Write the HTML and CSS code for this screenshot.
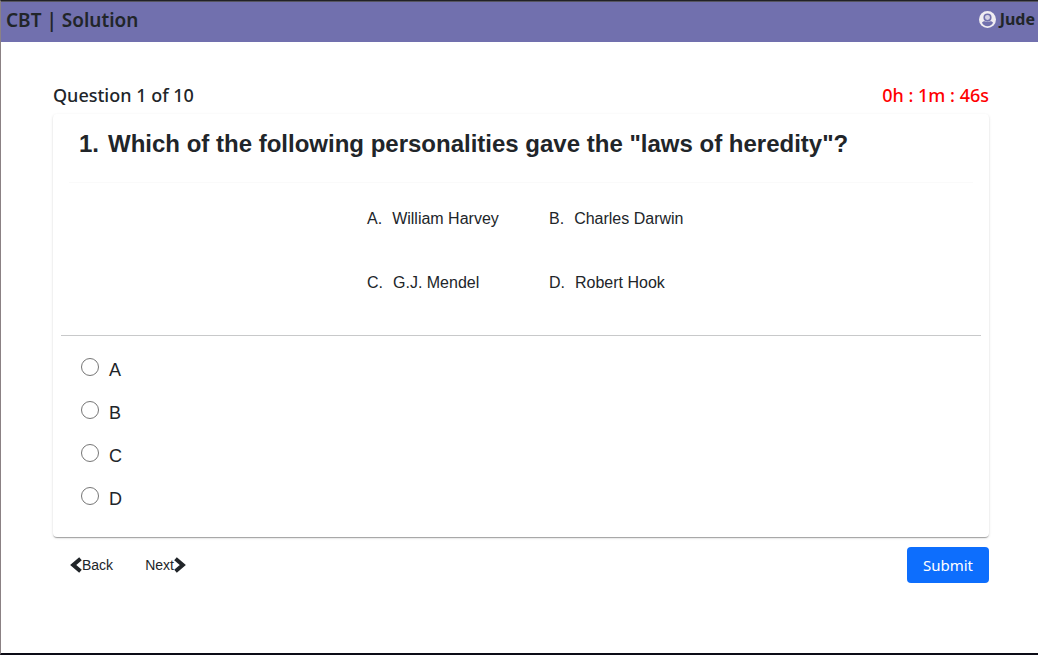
FILE: index.html
```html
<!DOCTYPE html>
<html lang="en">
<head>
<meta charset="utf-8">
<meta name="viewport" content="width=device-width, initial-scale=1">
<title>CBT | Solution</title>
<link rel="stylesheet" href="styles.css">
</head>
<body class="page">
  <header class="navbar">
    <h1 class="brand">CBT | Solution</h1>
    <div class="user">
      <svg class="user-icon" viewBox="0 0 16 16" aria-hidden="true">
        <circle cx="8" cy="8" r="8" fill="#f0edf2"/>
        <path fill="#7170ae" d="M2.800 11.100c.9-1.100 2-1.500 3.200-1.300 1.300.6 2.700.6 4 0 1.200-.2 2.300.2 3.200 1.300C12.200 13.200 10.300 14.300 8 14.300S3.800 13.200 2.800 11.100Z"/>
        <circle cx="8" cy="6.200" r="3.100" fill="#d5d2e6" stroke="#7170ae" stroke-width="1.500"/>
      </svg>
      <span class="user-name">Jude</span>
    </div>
  </header>
  <main class="content">
    <div class="status">
      <h2 class="status-text">Question 1 of 10</h2>
      <div class="status-text timer">0h : 1m : 46s</div>
    </div>
    <form class="quiz">
      <section class="card">
        <h3 class="question"><span>1.</span><span>Which of the following personalities gave the "laws of heredity"?</span></h3>
        <div class="options">
          <div class="option"><span>A.</span><span>William Harvey</span></div>
          <div class="option"><span>B.</span><span>Charles Darwin</span></div>
          <div class="option"><span>C.</span><span>G.J. Mendel</span></div>
          <div class="option"><span>D.</span><span>Robert Hook</span></div>
        </div>
        <div class="answers" role="radiogroup" aria-label="Answer">
          <label class="answer"><input class="radio" type="radio" name="answer" value="A"><span class="letter">A</span></label>
          <label class="answer"><input class="radio" type="radio" name="answer" value="B"><span class="letter">B</span></label>
          <label class="answer"><input class="radio" type="radio" name="answer" value="C"><span class="letter">C</span></label>
          <label class="answer"><input class="radio" type="radio" name="answer" value="D"><span class="letter">D</span></label>
        </div>
      </section>
      <div class="actions">
        <div class="pager">
          <button class="link-button" type="button">
            <svg class="chevron" viewBox="0 0 12 16" aria-hidden="true"><path d="M10.500 1.700 3.200 8l7.300 6.300"/></svg>Back
          </button>
          <button class="link-button" type="button">
            Next<svg class="chevron" viewBox="0 0 12 16" aria-hidden="true"><path d="M1.500 1.700 8.800 8l-7.300 6.300"/></svg>
          </button>
        </div>
        <button class="submit" type="submit">Submit</button>
      </div>
    </form>
  </main>
</body>
</html>
```
FILE: styles.css
```css
* {
  box-sizing: border-box;
}

.page {
  margin: 0;
  min-height: 100vh;
  border: solid #8b8184;
  border-width: 1px 0 2px 1px;
  border-top-color: #222226;
  border-bottom-color: #0c0c16;
  background: #fff;
  color: #212529;
  font-family: "Segoe UI", "Noto Sans", "Open Sans", sans-serif;
  font-size: 16px;
}

.navbar {
  display: flex;
  justify-content: space-between;
  align-items: flex-start;
  padding: 6px 3px 9px 5px;
  background: #7170ae;
  box-shadow: inset 0 1px #55545f;
}

.brand {
  margin: 0;
  font-size: 19px;
  font-weight: 600;
  line-height: 26px;
}

.user {
  display: flex;
  align-items: center;
  gap: 4px;
  line-height: 24px;
}

.user-icon {
  width: 17px;
  height: 17px;
}

.user-name {
  font-size: 16px;
  font-weight: 700;
}

.content {
  padding: 40px 49px 0 52px;
}

.status {
  display: flex;
  justify-content: space-between;
  padding-bottom: 6px;
}

.status-text {
  margin: 0;
  font-size: 18px;
  font-weight: 500;
  line-height: 26px;
}

.timer {
  color: #f00;
}

.card {
  padding: 0 8px 25px;
  border-radius: 4px;
  background: #fff;
  box-shadow: 0 2px 1px -1px rgba(0, 0, 0, .2), 0 1px 1px rgba(0, 0, 0, .14), 0 1px 3px rgba(0, 0, 0, .12);
  font-family: "Liberation Sans", Arial, sans-serif;
}

.question {
  display: flex;
  gap: 9px;
  margin: 0 8px;
  padding: 16px 10px 24px;
  border-bottom: 1px solid #fafafa;
  font-size: 24px;
  font-weight: 700;
  line-height: 28px;
}

.options {
  display: grid;
  grid-template-columns: 182px 182px;
  grid-auto-rows: 64px;
  justify-content: center;
  align-items: center;
  padding: 4px 0 20px;
  border-bottom: 1px solid #c8c9ca;
}

.option {
  display: flex;
  gap: 10px;
  padding-left: 28px;
}

.answers {
  display: grid;
  gap: 16px;
  padding: 20px 20px 0;
}

.answer {
  display: flex;
  align-items: flex-start;
  gap: 10px;
  font-size: 18px;
}

.radio {
  appearance: none;
  width: 18px;
  height: 18px;
  margin: 2px 0 0;
  border: 1px solid #767676;
  border-radius: 50%;
  background: #fff;
}

.radio:checked {
  background: radial-gradient(#0d6efd 45%, #fff 50%);
}

.letter {
  padding-top: 1px;
  line-height: 26px;
}

.actions {
  display: flex;
  justify-content: space-between;
  align-items: center;
  padding-top: 10px;
}

.pager {
  display: flex;
  gap: 32px;
  padding-left: 17px;
}

.link-button {
  display: flex;
  align-items: center;
  padding: 0;
  border: 0;
  background: none;
  color: inherit;
  font: 14px/20px "Liberation Sans", Arial, sans-serif;
}

.chevron {
  width: 12px;
  height: 16px;
  fill: none;
  stroke: currentColor;
  stroke-width: 4;
}

.submit {
  padding: 0 16px;
  border: 0;
  border-radius: 4px;
  background: #0d6efd;
  color: #fff;
  font: 15px/36px "Segoe UI", "Noto Sans", "Open Sans", sans-serif;
}
```
